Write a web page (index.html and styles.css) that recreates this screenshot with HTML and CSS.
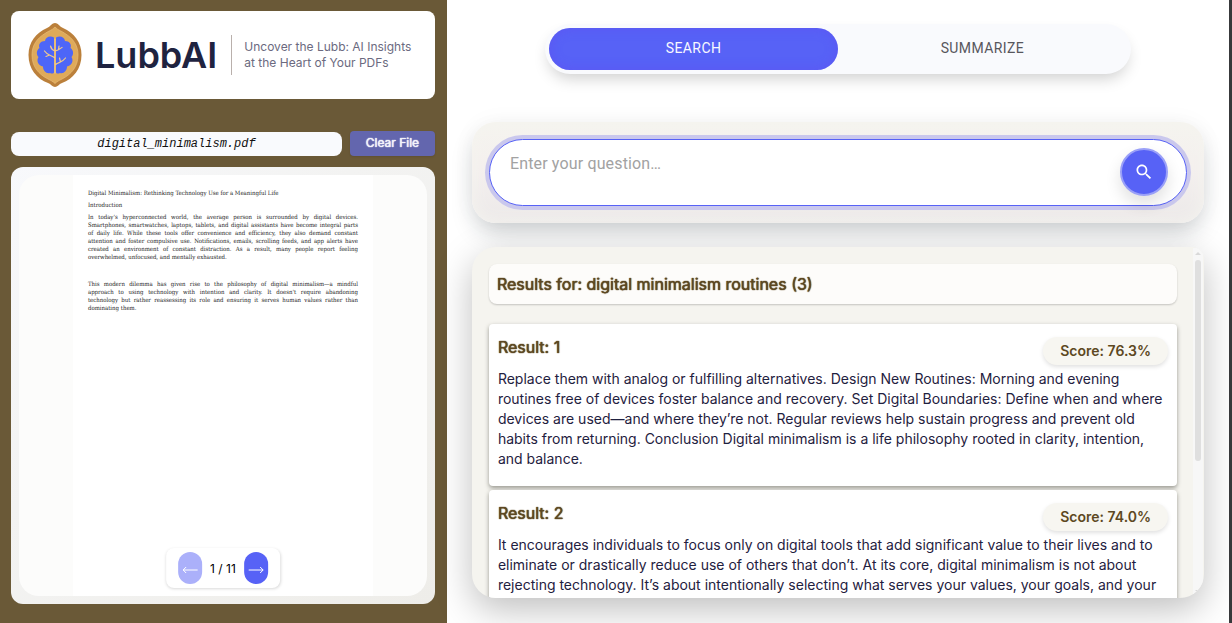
FILE: index.html
```html
<!DOCTYPE html>
<html lang="en">
<head>
<meta charset="utf-8">
<title>LubbAI</title>
<link rel="stylesheet" href="styles.css">
</head>
<body>
<div class="app">
  <aside class="sidebar">
    <header class="brand">
      <svg class="logo" viewBox="0 0 54 64" aria-hidden="true">
        <path d="M27 0C30 0 31 3 35 5C46 10 53.500 19 53.500 32C53.500 46 45 56 34 60C31 61 29.500 64 27 64C24.500 64 23 61 20 60C9 56 .5 46 .5 32C.5 19 8 10 19 5C23 3 24 0 27 0Z" fill="#bb803b"/>
        <path d="M27 4C30 7.500 34 8 37 10.500C45 15.500 50 22 50 32C50 44 43 51.500 34 56C31 57.500 29 58.500 27 60.500C25 58.500 23 57.500 20 56C11 51.500 4 44 4 32C4 22 9 15.500 17 10.500C20 8 24 7.500 27 4Z" fill="#dfaa5a" stroke="#e8bd78" stroke-width=".7"/>
        <path d="M26 14.500C22 12.500 17.500 14 17 18C12.500 18 10 21.500 11.500 25C8.500 27 8 31.500 10.500 34C8 38 10.500 43 15 43.500C15 48 18.500 51 22 50C24 51 25.500 50.500 26 49.500Z M28 14.500C32 12.500 36.500 14 37 18C41.500 18 44 21.500 42.500 25C45.500 27 46 31.500 43.500 34C46 38 43.500 43 39 43.500C39 48 35.500 51 32 50C30 51 28.500 50.500 28 49.500Z" fill="#4d66f8"/>
        <path d="M27 16V50M27 35C23 32 19 32 16.500 28M21.500 32L18 33.500M27 28C24 27 23 25 22.500 23M27 28C31 27 31 26 34 24.500M30.500 26.500L31 23M27 42C30 39 34 40 37.500 35M32.500 39L31.500 35" fill="none" stroke="#efc98c" stroke-width="1.200" stroke-linecap="round"/>
      </svg>
      <h1 class="brand-name">LubbAI</h1>
      <p class="tagline">Uncover the Lubb: AI Insights<br>at the Heart of Your PDFs</p>
    </header>

    <div class="file-row">
      <div class="file-name">digital_minimalism.pdf</div>
      <button class="clear" type="button">Clear File</button>
    </div>

    <section class="viewer" aria-label="Document">
      <div class="canvas">
        <article class="page">
          <p>Digital Minimalism: Rethinking Technology Use for a Meaningful Life</p>
          <p>Introduction</p>
          <div class="para">
            <span>In today's hyperconnected world, the average person is surrounded by digital devices.</span>
            <span>Smartphones, smartwatches, laptops, tablets, and digital assistants have become integral parts</span>
            <span>of daily life. While these tools offer convenience and efficiency, they also demand constant</span>
            <span>attention and foster compulsive use. Notifications, emails, scrolling feeds, and app alerts have</span>
            <span>created an environment of constant distraction. As a result, many people report feeling</span>
            <span>overwhelmed, unfocused, and mentally exhausted.</span>
          </div>
          <div class="para">
            <span>This modern dilemma has given rise to the philosophy of digital minimalism—a mindful</span>
            <span>approach to using technology with intention and clarity. It doesn't require abandoning</span>
            <span>technology but rather reassessing its role and ensuring it serves human values rather than</span>
            <span>dominating them.</span>
          </div>
        </article>
        <nav class="pager" aria-label="Pages">
          <button type="button" aria-label="Previous page" disabled>
            <svg viewBox="0 0 16 8"><path d="M15.500 4H1M4 1L1 4L4 7"/></svg>
          </button>
          <span>1 / 11</span>
          <button type="button" aria-label="Next page">
            <svg viewBox="0 0 16 8"><path d="M.5 4H15M12 1L15 4L12 7"/></svg>
          </button>
        </nav>
      </div>
    </section>
  </aside>

  <main class="main">
    <div class="tabs">
      <button class="tab active" type="button">SEARCH</button>
      <button class="tab" type="button">SUMMARIZE</button>
    </div>

    <form class="search-card">
      <div class="search-box">
        <textarea class="question" rows="1" aria-label="Question" placeholder="Enter your question…"></textarea>
        <button class="go" type="button" aria-label="Search">
          <svg viewBox="0 0 24 24"><path d="M15.500 14h-.79l-.28-.27C15.410 12.590 16 11.110 16 9.500 16 5.910 13.090 3 9.500 3S3 5.910 3 9.500 5.910 16 9.500 16c1.610 0 3.090-.59 4.230-1.570l.27.28v.79l5 4.990L20.490 19l-4.990-5zm-6 0C7.010 14 5 11.990 5 9.500S7.010 5 9.500 5 14 7.010 14 9.500 11.990 14 9.500 14z"/></svg>
        </button>
      </div>
    </form>

    <section class="results-card">
      <div class="results">
        <h2 class="results-title">Results for: digital minimalism routines (3)</h2>
        <article class="result">
          <div class="result-head"><h3>Result: 1</h3><span class="score">Score: 76.3%</span></div>
          <p>Replace them with analog or fulfilling alternatives. Design New Routines: Morning and evening routines free of devices foster balance and recovery. Set Digital Boundaries: Define when and where devices are used—and where they’re not. Regular reviews help sustain progress and prevent old habits from returning. Conclusion Digital minimalism is a life philosophy rooted in clarity, intention, and balance.</p>
        </article>
        <article class="result">
          <div class="result-head"><h3>Result: 2</h3><span class="score">Score: 74.0%</span></div>
          <p>It encourages individuals to focus only on digital tools that add significant value to their lives and to eliminate or drastically reduce use of others that don’t. At its core, digital minimalism is not about rejecting technology. It’s about intentionally selecting what serves your values, your goals, and your</p>
        </article>
      </div>
      <div class="scrollbar" aria-hidden="true">
        <i class="arrow up"></i><i class="thumb"></i><i class="arrow down"></i>
      </div>
    </section>
  </main>
</div>
</body>
</html>
```

FILE: styles.css
```css
* { box-sizing: border-box; }
body { margin: 0; font-family: Inter, "Liberation Sans", sans-serif; color: #1f2140; }
h1, h2, h3, p { margin: 0; }
button { border: 0; padding: 0; font: inherit; cursor: pointer; }

.app { display: grid; grid-template-columns: 4fr 7fr; height: 100vh; border-right: 3px solid #38393b; background: #fff; overflow: hidden; }

.sidebar { display: flex; flex-direction: column; min-height: 0; padding: 11px 12px 19px 11px; background: #6a5937; }
.brand { display: flex; align-items: center; height: 88px; padding-left: 17px; border-radius: 8px; background: #fff; }
.logo { width: 54px; height: 64px; margin-right: 13px; flex: none; }
.brand-name { font-size: 36px; line-height: 44px; font-weight: 600; color: #1f2340; }
.tagline { margin-left: 14px; padding: 4px 0 4px 12px; border-left: 1px solid #b9b0ac; font-size: 12px; line-height: 16px; color: #6b6a80; white-space: nowrap; }

.file-row { display: flex; align-items: flex-end; gap: 8px; margin: 32px 0 11px; }
.file-name { flex: 1; height: 24px; border-radius: 8px; background: #f9fafd; font: italic 12px/24px "Liberation Mono", monospace; text-align: center; color: #111; }
.clear { width: 85px; height: 25px; padding-bottom: 2px; border-radius: 4px; background: #6366ae; color: #f3f3fa; font-size: 12px; text-shadow: 0 0 1px #f3f3fa, 0 0 1px #f3f3fa; box-shadow: 0 1px 2px rgba(0,0,0,.1); }

.viewer { flex: 1; min-height: 0; padding: 8px; border-radius: 12px; background: linear-gradient(135deg, #f8f9fc, #f3f3f2 40%, #eeede9); }
.canvas { position: relative; height: 100%; border-radius: 20px; background: #fcfcfb; overflow: hidden; }
.page { width: 300px; height: 100%; margin: 0 auto; padding: 14px 15px; background: #fff; font: 6px/8px "DejaVu Serif Condensed", "DejaVu Serif", serif; color: #222; }
.page p { margin-bottom: 4px; white-space: nowrap; }
.para { margin-bottom: 19px; }
.para span { display: block; text-align: justify; text-align-last: justify; white-space: nowrap; }
.para span:last-child { text-align-last: left; }

.pager { position: absolute; left: 50%; bottom: 8px; transform: translateX(-50%); display: flex; align-items: center; gap: 8px; padding: 4px 12px; border-radius: 8px; background: #fff; box-shadow: 0 1px 3px rgba(0,0,0,.15); font-size: 12px; color: #000; white-space: nowrap; }
.pager button { display: grid; place-items: center; width: 24px; height: 32px; border-radius: 12px; background: #5762f6; }
.pager button:disabled { background: #abb0fa; }
.pager svg { width: 16px; height: 8px; margin-top: 3px; fill: none; stroke: #fff; stroke-width: 1; }

.main { display: flex; flex-direction: column; min-width: 0; min-height: 0; padding: 24px 25px 25px; }
.tabs { display: flex; align-self: center; width: 80%; height: 50px; padding: 4px; border-radius: 25px; background: #f9fafd; box-shadow: 0 8px 16px -4px rgba(0,0,0,.2); }
.tab { flex: 1; padding-bottom: 2px; border-radius: 21px; background: none; font: 14px/20px Roboto, sans-serif; letter-spacing: .4px; color: #57565c; }
.tab.active { background: #5762f6; color: #f8f8ff; box-shadow: inset 0 0 12px rgba(100,70,240,.4); }

.search-card { margin: 48px 0 24px; padding: 17px; border-radius: 24px; background: linear-gradient(180deg, #f5f4ef, #f4f0ee 45%, #ece9e9); box-shadow: 0 12px 24px -4px rgba(20,30,40,.22), 0 0 24px rgba(0,0,0,.04), inset 0 0 16px #f5f4ef; }
.search-box { display: flex; align-items: center; height: 67px; padding: 0 18px 2px 20px; border: 1px solid #5762f6; border-radius: 34px; background: #fff; box-shadow: 0 0 0 4px #cac8ed; }
.question { flex: 1; height: 48px; padding: 4px 0; border: 0; outline: 0; resize: none; background: none; font: 16px/24px Roboto, sans-serif; letter-spacing: .15px; color: #222; }
.question::placeholder { color: #a2a2a2; }
.go { display: grid; place-items: center; width: 48px; height: 48px; border: 2px solid #9aa0f8; border-radius: 50%; background: #5762f6; box-shadow: 0 8px 16px rgba(0,0,0,.12); }
.go svg { width: 20px; height: 20px; fill: #fff; }

.results-card { display: flex; flex: 1; min-height: 0; border-radius: 24px 12px 24px 24px; background: #f5f4ef; box-shadow: 0 12px 36px rgba(0,0,0,.25); overflow: hidden; }
.results { flex: 1; min-width: 0; padding: 17px 16px 0 17px; overflow: hidden; }
.results-title, .result h3 { font-size: 16px; line-height: 24px; font-weight: 400; color: #5d4822; text-shadow: 0 0 1px #5d4822, 0 0 1px #5d4822; }
.results-title { margin-bottom: 20px; padding: 8px; border-radius: 8px; background: #fdfcfa; box-shadow: 0 1px 2px rgba(0,0,0,.2); }
.result { min-height: 162px; margin-bottom: 4px; padding: 11px 9px 16px; border-radius: 4px; background: #fff; box-shadow: 0 2px 4px rgba(60,60,50,.5); }
.result-head { display: flex; justify-content: space-between; height: 34px; }
.score { height: 28px; margin-top: 2px; padding: 0 17px; border-radius: 14px; background: #f7f6f1; box-shadow: 0 2px 4px rgba(0,0,0,.12); font-size: 14px; line-height: 28px; font-weight: 600; color: #5d4822; }
.result p { font-size: 14px; line-height: 20px; }

.scrollbar { display: flex; flex-direction: column; align-items: center; width: 10px; margin: 1px 1px 1px 0; padding: 4px 0; background: #f7f7f7; }
.arrow { width: 0; height: 0; border: 3px solid transparent; }
.up { border-top: 0; border-bottom-color: #d9d9d9; }
.down { margin-top: auto; border-bottom: 0; border-top-color: #d9d9d9; }
.thumb { width: 6px; height: 59%; margin-top: 5px; border-radius: 3px; background: #dfdfdf; }
```
